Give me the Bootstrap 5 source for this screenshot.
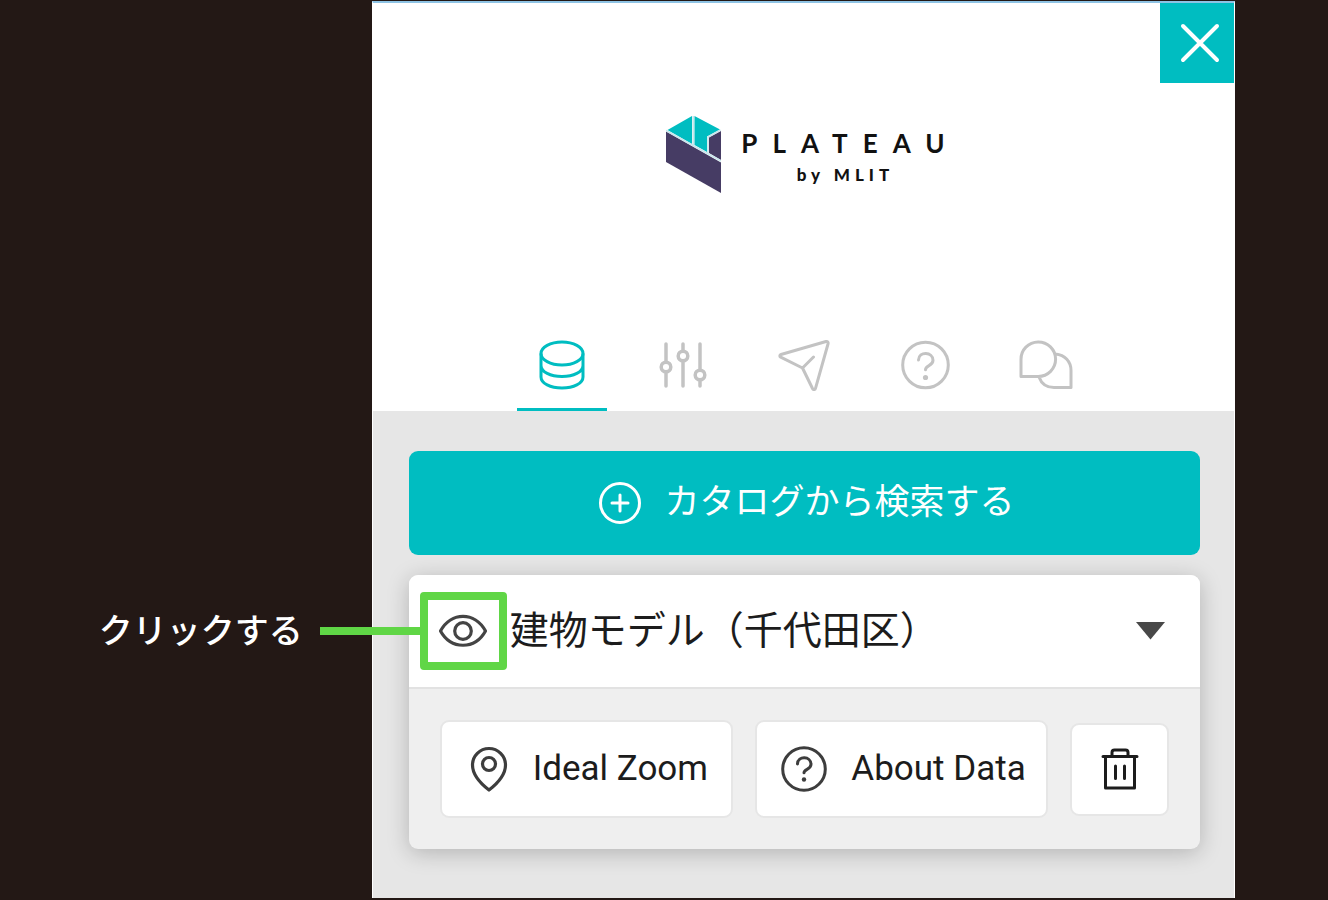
<!DOCTYPE html>
<html lang="ja">
<head>
<meta charset="utf-8">
<meta name="viewport" content="width=device-width, initial-scale=1">
<title>PLATEAU by MLIT</title>
<link href="https://cdn.jsdelivr.net/npm/bootstrap@5.3.0/dist/css/bootstrap.min.css" rel="stylesheet">
<style>
  :root { --teal: #00bdc1; --ink: #231815; --green: #60d646; }
  body { background: var(--ink); color: #1c1c1c; font-family: Roboto, "Noto Sans CJK JP", sans-serif; padding: 1px 7% 2px 28%; }
  svg { display: block; flex: none; }
  .panel { min-height: calc(100vh - 3px); background: #e6e6e6; border-top: 2px solid #8ec3e4; border-left: 1px solid #fff; border-right: 1px solid #fff; }
  .close-btn { width: 74px; height: 80px; background: var(--teal); padding: 0 0 0 6px; }
  .brand { margin-top: 32px; gap: 20px; padding-left: 4px; color: #111; font-family: Lato, sans-serif; }
  .brand-name { font-size: 26px; line-height: 32px; letter-spacing: 15px; margin-right: -15px; font-weight: 700; }
  .brand-sub { font-size: 17px; line-height: 32px; letter-spacing: 5px; margin-right: -5px; font-weight: 900; }
  .brand-text { padding-top: 12px; }
  .tabs { margin-top: 136px; padding-left: 2px; gap: 31px; }
  .tab-btn { width: 90px; height: 82px; color: #c3c3c3; border: 0; border-bottom: 3px solid transparent; border-radius: 0; padding: 0 0 8px; }
  .tab-btn.active { color: var(--teal); border-bottom-color: var(--teal); }
  .content { padding: 40px 34px 48px 36px; }
  .search-btn, .search-btn:hover { background: var(--teal); color: #fff; height: 104px; border: 0; border-radius: 9px; padding-left: 16px; gap: 22px; font-size: 35px; line-height: 48px; }
  .layer { margin-top: 20px; border: 0; border-radius: 9px; box-shadow: 0 4px 22px rgba(0,0,0,.22); background: #efefef; }
  .layer-head { height: 114px; padding: 0 35px 0 11px; background: #fff; border-bottom: 2px solid #e2e2e2; border-radius: 9px 9px 0 0; }
  .eye-btn, .eye-btn:hover { width: 87px; height: 78px; border: 8px solid var(--green); border-radius: 4px; color: #444; background: #fff; }
  .layer-title { font-size: 39px; line-height: 56px; margin: 0; padding-left: 3px; font-weight: 400; }
  .callout { right: 100%; top: 50%; transform: translateY(-50%); gap: 17px; color: #fff; font-size: 34px; line-height: 48px; font-weight: 500; white-space: nowrap; }
  .callout-line { width: 100px; height: 8px; background: var(--green); }
  .layer-tools { padding: 31px; gap: 22px; }
  .tool, .tool:hover { height: 98px; background: #fff; border: 2px solid #e6e6e6; border-radius: 9px; color: #1c1c1c; font-size: 35px; line-height: 40px; padding: 0; white-space: nowrap; }
  .tool-wide { flex: 1 1 0; padding-left: 4px !important; }
  .tool-del, .tool-del:hover { width: 99px; height: 93px; }
  .tool svg { color: #3d3d3d; }
  .tool-del svg { color: #1c1c1c; }
</style>
</head>
<body>
<main class="panel">
  <header class="bg-white d-flex flex-column align-items-center">
    <button type="button" class="btn close-btn rounded-0 border-0 align-self-end d-flex align-items-center justify-content-center" aria-label="閉じる">
      <svg width="42" height="42" viewBox="0 0 42 42" fill="none" stroke="#fff" stroke-width="4" stroke-linecap="round"><path d="M4 4 38 38M38 4 4 38"/></svg>
    </button>
    <div class="brand d-flex">
      <svg width="55" height="78" viewBox="0 0 55 78">
        <path fill="#463c64" d="M0 16.500 55 47.500V78L0 47Z"/>
        <path fill="#463c64" d="M43 22.500 55 16V45L43 38Z"/>
        <path fill="#00bdc1" d="M26 1V29L1.500 15Z"/>
        <path fill="#00bdc1" d="M28.500 1 54 14.500 41 21.500V37L28.500 30Z"/>
        <path fill="none" stroke="#c9e6ec" stroke-width="1.600" d="M27.200 1V30M0 15.500 55 46M54.500 15 42 22V38"/>
      </svg>
      <div class="brand-text text-center">
        <div class="brand-name">PLATEAU</div>
        <div class="brand-sub">by MLIT</div>
      </div>
    </div>
    <nav class="tabs d-flex" aria-label="メニュー">
      <button type="button" class="btn tab-btn active d-flex align-items-center justify-content-center" aria-label="データ">
        <svg width="50" height="50" viewBox="0 0 50 50" fill="none" stroke="currentColor" stroke-width="3"><ellipse cx="25" cy="13.500" rx="21" ry="11.500"/><path d="M4 13.500V37c0 6.500 9.400 11 21 11s21-4.500 21-11V13.500M4 25.500c0 6.500 9.400 11 21 11s21-4.500 21-11"/></svg>
      </button>
      <button type="button" class="btn tab-btn d-flex align-items-center justify-content-center" aria-label="設定">
        <svg width="50" height="50" viewBox="0 0 50 50" fill="none" stroke="currentColor" stroke-width="3.500" stroke-linecap="round"><path d="M8 4V22M8 32.500V46M25 4V11M25 21V46M42 4V29.500M42 40V46"/><circle cx="8" cy="27" r="4.800"/><circle cx="25" cy="16" r="4.800"/><circle cx="42" cy="35" r="4.800"/></svg>
      </button>
      <button type="button" class="btn tab-btn d-flex align-items-center justify-content-center" aria-label="共有">
        <svg width="52" height="52" viewBox="0 0 52 52" fill="none" stroke="currentColor" stroke-width="3" stroke-linecap="round" stroke-linejoin="round"><path d="M48 2.500 3 15.500c-1.500.5-1.500 2-.3 2.700L24.500 29 34.500 49.500c.8 1.500 2.500 1.500 3-.2L50 5c.5-1.800-.5-2.900-2-2.500ZM24.500 29 35.500 18"/></svg>
      </button>
      <button type="button" class="btn tab-btn d-flex align-items-center justify-content-center" aria-label="ヘルプ">
        <svg width="50" height="50" viewBox="0 0 50 50" fill="none" stroke="currentColor" stroke-width="3" stroke-linecap="round"><circle cx="25.500" cy="25" r="22.800"/><path d="M18.500 20c.3-9 14.500-8.500 14.500.3 0 6-7.500 4.500-7.500 9.500"/><circle cx="25.500" cy="37.500" r="2.600" fill="currentColor" stroke="none"/></svg>
      </button>
      <button type="button" class="btn tab-btn d-flex align-items-center justify-content-center" aria-label="フィードバック">
        <svg width="54" height="50" viewBox="0 0 54 50" fill="none" stroke="currentColor" stroke-width="3" stroke-linejoin="round"><path d="M2 36.500V19.500A17.300 17.300 0 1 1 19.300 36.500ZM36.500 14C46 15 52 21.500 52 30.500V47.500H35C27.500 47.500 22.500 44 20 37"/></svg>
      </button>
    </nav>
  </header>

  <section class="content">
    <button type="button" class="btn search-btn w-100 d-flex align-items-center justify-content-center">
      <svg width="44" height="44" viewBox="0 0 44 44" fill="none" stroke="#fff" stroke-width="3" stroke-linecap="round"><circle cx="22" cy="22" r="19.500"/><path d="M22 14V30M14 22H30"/></svg>
      <span>カタログから検索する</span>
    </button>

    <article class="layer card">
      <div class="layer-head d-flex align-items-center">
        <div class="position-relative">
          <button type="button" class="btn eye-btn p-0 d-flex align-items-center justify-content-center" aria-label="表示切替">
            <svg width="50" height="36" viewBox="0 0 50 36" fill="none" stroke="currentColor" stroke-width="3.200" stroke-linejoin="round"><path d="M2.500 18C13-1.500 37-1.500 47.500 18 37 37 13 37 2.500 18Z"/><circle cx="25" cy="18" r="8.300"/></svg>
          </button>
          <div class="callout position-absolute d-flex align-items-center">
            <span>クリックする</span><span class="callout-line"></span>
          </div>
        </div>
        <h2 class="layer-title flex-grow-1">建物モデル（千代田区）</h2>
        <button type="button" class="btn border-0 p-0" aria-label="開閉">
          <svg width="29" height="18" viewBox="0 0 29 18" fill="#484848"><path d="M0 0H29L14.500 17.500Z"/></svg>
        </button>
      </div>
      <div class="layer-tools d-flex align-items-center">
        <button type="button" class="btn tool tool-wide d-flex align-items-center justify-content-center gap-4">
          <svg width="40" height="48" viewBox="0 0 40 48" fill="none" stroke="currentColor" stroke-width="3.200" stroke-linejoin="round"><path d="M20 45C9 36.500 3.500 28.500 3.500 20a16.500 16.500 0 0 1 33 0C36.500 28.500 31 36.500 20 45Z"/><circle cx="20" cy="19" r="6.500"/></svg>
          <span>Ideal Zoom</span>
        </button>
        <button type="button" class="btn tool tool-wide d-flex align-items-center justify-content-center gap-4">
          <svg width="46" height="46" viewBox="0 0 46 46" fill="none" stroke="currentColor" stroke-width="3" stroke-linecap="round"><circle cx="23" cy="23" r="21.300"/><path d="M16.500 18c.3-8.500 13.500-8 13.500.3 0 5.500-7 4.500-7 8.500"/><circle cx="23" cy="33.500" r="2.200" fill="currentColor" stroke="none"/></svg>
          <span>About Data</span>
        </button>
        <button type="button" class="btn tool tool-del flex-shrink-0 d-flex align-items-center justify-content-center" aria-label="削除">
          <svg width="38" height="42" viewBox="0 0 38 42" fill="none" stroke="currentColor" stroke-width="3" stroke-linecap="round" stroke-linejoin="round"><path d="M2 8.500H36M4.500 8.500V40H33.500V8.500M11 8V4.500Q11 2 13.500 2H24.500Q27 2 27 4.500V8M14.500 18V30.500M23.500 18V30.500"/></svg>
        </button>
      </div>
    </article>
  </section>
</main>
<script src="https://cdn.jsdelivr.net/npm/bootstrap@5.3.0/dist/js/bootstrap.bundle.min.js"></script>
</body>
</html>
